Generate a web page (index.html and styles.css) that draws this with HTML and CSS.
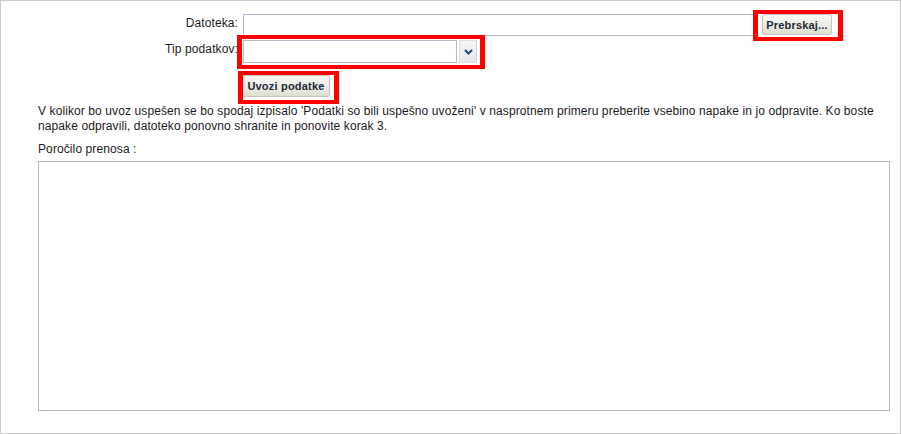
FILE: index.html
```html
<!DOCTYPE html>
<html lang="sl">
<head>
  <meta charset="UTF-8" />
  <meta name="viewport" content="width=device-width, initial-scale=1.0"/>
  <title>Uvoz podatkov</title>
  <link rel="stylesheet" href="styles.css">
</head>
<body>

  <div class="page">

    <!-- Import form -->
    <div class="form">
      <div class="row row-file">
        <label class="label">Datoteka:</label>
        <div class="file">
          <span class="file-text"></span>
          <button class="btn btn-browse">Prebrskaj...</button>
        </div>
      </div>

      <div class="row row-type">
        <label class="label">Tip podatkov:</label>
        <div class="combo">
          <span class="combo-text"></span>
          <span class="combo-trigger">
            <svg width="9" height="6" viewBox="0 0 9 6"><path d="M1 1 L4.5 4.5 L8 1" fill="none" stroke="#27467f" stroke-width="2"/></svg>
          </span>
        </div>
      </div>

      <div class="row row-submit">
        <span class="label"></span>
        <button class="btn btn-import">Uvozi podatke</button>
      </div>
    </div>

    <!-- Report -->
    <div class="content">
      <p class="info">V kolikor bo uvoz uspešen se bo spodaj izpisalo 'Podatki so bili uspešno uvoženi' v nasprotnem primeru preberite vsebino napake in jo odpravite. Ko boste napake odpravili, datoteko ponovno shranite in ponovite korak 3.</p>
      <div class="report-label">Poročilo prenosa :</div>
      <textarea class="report"></textarea>
    </div>

    <!-- Red annotation frames -->
    <div class="mark mark-browse"></div>
    <div class="mark mark-type"></div>
    <div class="mark mark-import"></div>

  </div>

</body>
</html>
```

FILE: styles.css
```css
body {
  margin: 0;
  font-family: "Liberation Sans", Arial, sans-serif;
  font-size: 12px;
  letter-spacing: 0.1px;
  line-height: 15px;
  color: #1b1b24;
  background: #fff;
}

.page {
  position: relative;
  width: 901px;
  height: 434px;
  box-sizing: border-box;
  border: 1px solid #cccccc;
}

.form {
  padding-top: 13px;
}

.row {
  display: flex;
  align-items: flex-start;
}

.label {
  width: 237px;
  padding-top: 2px;
  margin-right: 5px;
  text-align: right;
  white-space: nowrap;
}

.row-type {
  margin-top: 4px;
}

.row-submit {
  margin-top: 12px;
}

.file {
  display: flex;
  align-items: flex-start;
  gap: 4px;
}

.file-text {
  display: block;
  width: 515px;
  height: 22px;
  box-sizing: border-box;
  border: 1px solid #b5b8c8;
  background: #fff;
}

.combo {
  display: flex;
  gap: 2px;
}

.combo-text {
  display: block;
  width: 214px;
  height: 23px;
  box-sizing: border-box;
  border: 1px solid #b5b8c8;
  background: #fff;
}

.combo-trigger {
  display: flex;
  align-items: center;
  justify-content: center;
  width: 18px;
  height: 23px;
  box-sizing: border-box;
  border: 1px solid #dde0e6;
  border-right-color: #cbd6cc;
  background: linear-gradient(#f4f4f6, #e6e8ec);
}

.btn {
  font-family: "Liberation Sans", Arial, sans-serif;
  font-size: 11px;
  font-weight: bold;
  letter-spacing: 0.2px;
  color: #232a36;
  border: 1px solid #c6c6c6;
  border-radius: 2px;
  background: linear-gradient(#f7f7f5, #ecece6 55%, #dcdfd0);
  padding: 0;
  cursor: pointer;
}

.btn-browse {
  width: 70px;
  height: 21px;
}

.btn-import {
  width: 88px;
  height: 22px;
  margin-left: -1px;
}

.row-submit .label {
  padding-top: 0;
}

.content {
  padding: 0 11px 0 37px;
}

.info {
  margin: 7px 0 8px 0;
}

.report-label {
  margin-bottom: 4px;
}

.report {
  display: block;
  width: 852px;
  height: 250px;
  box-sizing: border-box;
  margin: 0;
  border: 1px solid #b5b8c8;
  resize: none;
  font-family: "Liberation Sans", Arial, sans-serif;
}

.mark {
  position: absolute;
  box-sizing: border-box;
  border: solid #ff0000;
  border-width: 4px 5px;
}

.mark-browse {
  left: 752px;
  top: 9px;
  width: 90px;
  height: 31px;
}

.mark-type {
  left: 236px;
  top: 34px;
  width: 248px;
  height: 34px;
}

.mark-import {
  left: 237px;
  top: 70px;
  width: 101px;
  height: 33px;
}
```
